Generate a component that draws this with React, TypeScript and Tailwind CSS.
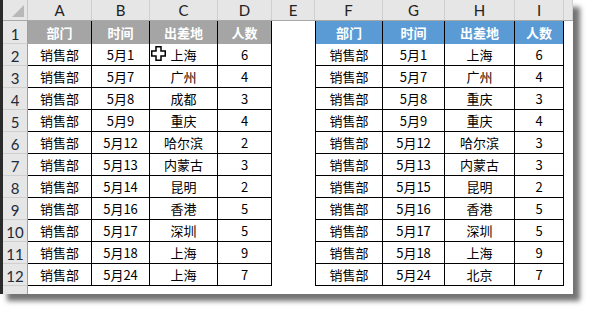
const left: string[][] = [
  ['销售部', '5月1', '上海', '6'],
  ['销售部', '5月7', '广州', '4'],
  ['销售部', '5月8', '成都', '3'],
  ['销售部', '5月9', '重庆', '4'],
  ['销售部', '5月12', '哈尔滨', '2'],
  ['销售部', '5月13', '内蒙古', '3'],
  ['销售部', '5月14', '昆明', '2'],
  ['销售部', '5月16', '香港', '5'],
  ['销售部', '5月17', '深圳', '5'],
  ['销售部', '5月18', '上海', '9'],
  ['销售部', '5月24', '上海', '7'],
]

const right: string[][] = [
  ['销售部', '5月1', '上海', '6'],
  ['销售部', '5月7', '广州', '4'],
  ['销售部', '5月8', '重庆', '3'],
  ['销售部', '5月9', '重庆', '4'],
  ['销售部', '5月12', '哈尔滨', '3'],
  ['销售部', '5月13', '内蒙古', '3'],
  ['销售部', '5月15', '昆明', '2'],
  ['销售部', '5月16', '香港', '5'],
  ['销售部', '5月17', '深圳', '5'],
  ['销售部', '5月18', '上海', '9'],
  ['销售部', '5月24', '北京', '7'],
]

const heads = ['部门', '时间', '出差地', '人数']

// left table A-D, gap column E, right table F-I, sliver of J
const leftCols = ['w-[64px] border-r', 'w-[58px] border-r', 'w-[68px] border-r', 'w-[54px] border-r']
const rightCols = ['w-[68px] border-x', 'w-[62px] border-r', 'w-[70px] border-r', 'w-[49px] border-r']
const letterCols = [
  ['A', 'w-[64px]'],
  ['B', 'w-[58px]'],
  ['C', 'w-[68px]'],
  ['D', 'w-[54px]'],
  ['E', 'w-[43px]'],
  ['F', 'w-[68px]'],
  ['G', 'w-[62px]'],
  ['H', 'w-[70px]'],
  ['I', 'w-[49px]'],
  ['', 'w-[9px]'],
]

const cjk = "font-['Microsoft_YaHei','Noto_Sans_CJK_SC',sans-serif]"
const latin = "font-['Lato','Open_Sans',sans-serif]"

function RowHead({ n, tall }: { n: number | string; tall?: boolean }) {
  return (
    <div
      className={`flex w-[25px] shrink-0 items-end justify-center border-r border-b border-r-[#9e9e9e] border-b-[#cfcfcf] bg-[#e6e6e6] pb-[1px] text-[15px] leading-none text-[#1d2b3a] ${latin} ${tall ? 'h-[23px]' : 'h-[22px]'}`}
    >
      {n}
    </div>
  )
}

function TableRow({ n, l, r }: { n: number; l: string[]; r: string[] }) {
  return (
    <div className="flex h-[22px]">
      <RowHead n={n} />
      {l.map((v, i) => (
        <div
          key={i}
          className={`flex shrink-0 items-center justify-center border-b border-black text-[13px] text-black ${cjk} ${leftCols[i]}`}
        >
          {v}
        </div>
      ))}
      <div className="w-[43px] shrink-0" />
      {r.map((v, i) => (
        <div
          key={i}
          className={`flex shrink-0 items-center justify-center border-b border-black text-[13px] text-black ${cjk} ${rightCols[i]}`}
        >
          {v}
        </div>
      ))}
      <div className="w-[9px] shrink-0" />
    </div>
  )
}

export default function App() {
  return (
    <div className="h-[310px] w-[589px] bg-white">
      <div className="relative flex h-[294px] w-[573px] overflow-hidden bg-white shadow-[7px_7px_5px_rgba(0,0,0,0.55)]">
        <div className="w-[3px] shrink-0 bg-[#2a2a2a]" />
        <div className="flex flex-col">
          {/* column letters */}
          <div className="flex h-[21px] border-b border-[#a8a8a8] bg-[#e6e6e6]">
            <div className="flex w-[25px] shrink-0 items-end justify-end border-r border-[#c8c8c8] p-[3px]">
              <svg width="12" height="12" viewBox="0 0 12 12">
                <path d="M12 0V12H0Z" fill="#b8b8b8" />
              </svg>
            </div>
            {letterCols.map(([c, w]) => (
              <div
                key={w + c}
                className={`flex shrink-0 items-center justify-center border-r border-[#cfcfcf] pt-[1px] text-[15px] leading-none text-[#222] ${latin} ${w}`}
              >
                {c}
              </div>
            ))}
          </div>

          {/* header row 1 */}
          <div className="flex h-[23px]">
            <RowHead n={1} tall />
            {heads.map((h, i) => (
              <div
                key={h}
                className={`flex shrink-0 items-center justify-center border-black bg-[#a5a5a5] text-[13px] font-bold text-white ${cjk} ${leftCols[i]}`}
              >
                {h}
              </div>
            ))}
            <div className="w-[43px] shrink-0" />
            {heads.map((h, i) => (
              <div
                key={h}
                className={`flex shrink-0 items-center justify-center border-black bg-[#5b9bd5] text-[13px] font-bold text-white ${cjk} ${rightCols[i]}`}
              >
                {h}
              </div>
            ))}
            <div className="w-[9px] shrink-0" />
          </div>

          {left.map((l, i) => (
            <TableRow key={i} n={i + 2} l={l} r={right[i]} />
          ))}

          {/* sliver of row 13 */}
          <div className="flex h-[8px]">
            <div className="w-[25px] shrink-0 border-r border-[#9e9e9e] bg-[#e6e6e6]" />
          </div>
        </div>

        {/* cell cursor */}
        <svg className="absolute left-[151px] top-[46px]" width="15" height="15" viewBox="0 0 15 15">
          <path
            d="M5 0.75H10V5H14.25V10H10V14.25H5V10H0.75V5H5Z"
            fill="white"
            stroke="black"
            strokeWidth="1.5"
          />
        </svg>
      </div>
    </div>
  )
}
